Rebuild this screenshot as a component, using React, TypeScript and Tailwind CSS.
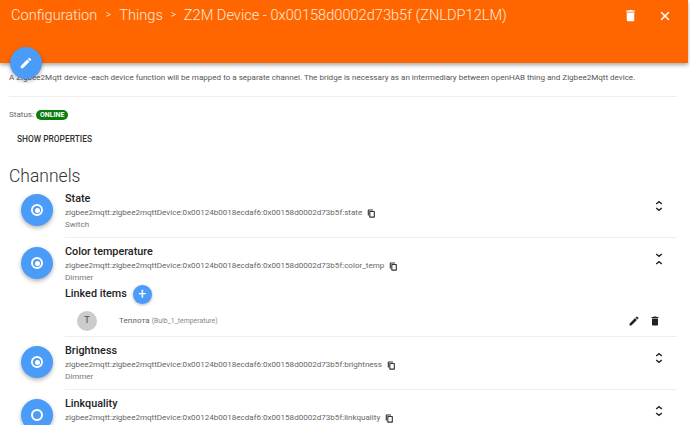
import { X } from "lucide-react";

function TrashIcon({ className }: { className: string }) {
  return (
    <svg viewBox="0 0 24 24" className={className} fill="currentColor">
      <path d="M6 19c0 1.1.9 2 2 2h8c1.1 0 2-.9 2-2V7H6v12zM19 4h-3.5l-1-1h-5l-1 1H5v2h14V4z" />
    </svg>
  );
}

function PencilIcon({ className }: { className: string }) {
  return (
    <svg viewBox="0 0 24 24" className={className} fill="currentColor">
      <path d="M3 17.25V21h3.75L17.81 9.94l-3.75-3.75L3 17.25zM20.71 7.04a1 1 0 0 0 0-1.41l-2.34-2.34a1 1 0 0 0-1.41 0l-1.83 1.83 3.75 3.75 1.83-1.83z" />
    </svg>
  );
}

function CopyIcon() {
  return (
    <svg viewBox="0 0 24 24" className="ml-[5px] h-[9px] w-[9px] shrink-0 text-[#333]" fill="currentColor">
      <path d="M16 1H4a2 2 0 0 0-2 2v14h3V4h11V1zm3 4H8a2 2 0 0 0-2 2v14c0 1.1.9 2 2 2h11a2 2 0 0 0 2-2V7a2 2 0 0 0-2-2zm-1 15H9V8h9v12z" />
    </svg>
  );
}

function ExpandIcon({ open }: { open?: boolean }) {
  return (
    <svg viewBox="0 0 8 12" className="h-[12px] w-[8px] text-[#222]" fill="none" stroke="currentColor" strokeWidth="1.4">
      {open ? (
        <>
          <path d="M1.2 1l2.8 2.4L6.8 1" />
          <path d="M1.2 11l2.8-2.4L6.8 11" />
        </>
      ) : (
        <>
          <path d="M1.2 4l2.8-2.4L6.8 4" />
          <path d="M1.2 8l2.8 2.4L6.8 8" />
        </>
      )}
    </svg>
  );
}

function ChannelIcon({ filled }: { filled: boolean }) {
  return (
    <div className="flex h-8 w-8 shrink-0 items-center justify-center rounded-full bg-[#4a9cf8] shadow-[0_2px_4px_rgba(0,0,0,0.3)]">
      <div className="flex h-[12px] w-[12px] items-center justify-center rounded-full border-2 border-white">
        {filled && <div className="h-[5px] w-[5px] rounded-full bg-white" />}
      </div>
    </div>
  );
}

const base = "zigbee2mqtt:zigbee2mqttDevice:0x00124b0018ecdaf6:0x00158d0002d73b5f:";

const channels = [
  { title: "State", id: "state", type: "Switch", filled: true, open: false },
  { title: "Color temperature", id: "color_temp", type: "Dimmer", filled: true, open: true },
  { title: "Brightness", id: "brightness", type: "Dimmer", filled: true, open: false },
  { title: "Linkquality", id: "linkquality", type: "", filled: false, open: false },
];

export default function App() {
  return (
    <div className="relative h-[425px] w-[690px] overflow-hidden bg-white font-['Roboto',sans-serif]">
      <header className="flex h-[63px] w-[688px] items-start justify-between bg-[#ff6600] pl-[11px] pr-[16px] pt-[4px] text-white shadow-[0_2px_4px_rgba(0,0,0,0.35)]">
        <div className="flex items-center text-[14.6px] font-light leading-[22px] text-[#ffe9da]">
          <span>Configuration</span>
          <span className="w-[22px] text-center text-[11px]">&gt;</span>
          <span>Things</span>
          <span className="w-[21px] text-center text-[11px]">&gt;</span>
          <span>Z2M Device - 0x00158d0002d73b5f (ZNLDP12LM)</span>
        </div>
        <div className="flex items-center gap-[20px] pt-[4px]">
          <TrashIcon className="h-[15px] w-[15px]" />
          <X className="h-[14px] w-[14px]" strokeWidth={2.5} />
        </div>
      </header>

      <button className="absolute left-[10px] top-[47px] flex h-8 w-8 items-center justify-center rounded-full bg-[#4a9cf8] text-white shadow-[0_2px_4px_rgba(0,0,0,0.3)]">
        <PencilIcon className="h-[14px] w-[14px]" />
      </button>

      <main className="w-[688px] pl-[9px] pr-[11px]">
        <p className="pt-[9px] text-[8.05px] leading-[12px] text-[#555]">
          A Zigbee2Mqtt device -each device function will be mapped to a separate channel. The bridge is necessary as an intermediary between openHAB thing and Zigbee2Mqtt device.
        </p>
        <div className="mt-[12px] border-t border-[#eeeeee]" />

        <div className="mt-[12px] flex items-center text-[8.05px] leading-[12px] text-[#666]">
          <span>Status:</span>
          <span className="ml-[2px] rounded-full bg-[#0b7d0b] px-[4px] text-[7px] font-bold leading-[10px] text-white">ONLINE</span>
        </div>

        <div className="mt-[12px] pl-[8px] text-[8.4px] font-medium leading-[12px] text-[#333]">SHOW PROPERTIES</div>

        <h2 className="mb-[-1px] mt-[21px] text-[17.5px] font-light leading-[20px] text-[#333]">Channels</h2>

        <div>
          {channels.map((c) => (
            <div key={c.id} className="flex gap-[12px] pl-[12px]">
              <div className="pt-[9px]">
                <ChannelIcon filled={c.filled} />
              </div>
              <div className="min-w-0 flex-1 border-b border-[#eeeeee] pb-[6px] pt-[7px]">
                <div className="flex items-start justify-between pr-[14px]">
                  <div>
                    <div className="text-[10.8px] font-medium leading-[14px] text-[#222]">{c.title}</div>
                    <div className="mt-[1px] flex items-center text-[8.05px] leading-[12px] text-[#666]">
                      <span>{base + c.id}</span>
                      <CopyIcon />
                    </div>
                    {c.type && <div className="text-[8.05px] leading-[12px] text-[#777]">{c.type}</div>}
                  </div>
                  <div className="pt-[8px]">
                    <ExpandIcon open={c.open} />
                  </div>
                </div>
                {c.open && (
                  <div>
                    <div className="flex items-center gap-[6px]">
                      <span className="text-[10.8px] font-medium leading-[20px] text-[#222]">Linked items</span>
                      <span className="flex h-[19px] w-[19px] items-center justify-center rounded-full bg-[#4a9cf8] text-[14px] leading-none text-white shadow-[0_1px_3px_rgba(0,0,0,0.3)]">+</span>
                    </div>
                    <div className="mt-[7px] -mb-px flex items-center pl-[12px] pr-[16px]">
                      <span className="flex h-5 w-5 items-center justify-center rounded-full bg-[#cccccc] text-[9px] font-medium text-[#666]">T</span>
                      <span className="ml-[22px] text-[8.05px] text-[#666]">Теплота <span className="text-[6.9px] text-[#888]">(Bulb_1_temperature)</span></span>
                      <div className="ml-auto flex items-center gap-[9px] text-[#222]">
                        <PencilIcon className="h-[12px] w-[12px]" />
                        <TrashIcon className="h-[12px] w-[12px]" />
                      </div>
                    </div>
                  </div>
                )}
              </div>
            </div>
          ))}
        </div>
      </main>
    </div>
  );
}
